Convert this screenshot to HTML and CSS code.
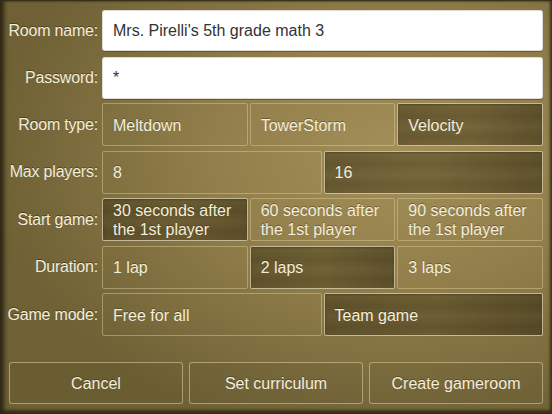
FILE: index.html
```html
<!DOCTYPE html>
<html lang="en">
<head>
  <meta charset="UTF-8">
  <title>Create gameroom</title>
  <link rel="stylesheet" href="styles.css">
</head>
<body>

<div class="screen">
  <form class="room-form">
    <div class="row input-row">
      <label>Room name:</label>
      <input type="text" value="Mrs. Pirelli's 5th grade math 3">
    </div>
    <div class="row input-row pw">
      <label>Password:</label>
      <input type="text" value="*">
    </div>

    <div class="options">
      <div class="row">
        <label>Room type:</label>
        <div class="choices three">
          <div class="choice">Meltdown</div>
          <div class="choice">TowerStorm</div>
          <div class="choice selected">Velocity</div>
        </div>
      </div>
      <div class="row">
        <label>Max players:</label>
        <div class="choices two">
          <div class="choice">8</div>
          <div class="choice selected">16</div>
        </div>
      </div>
      <div class="row">
        <label>Start game:</label>
        <div class="choices three">
          <div class="choice selected">30 seconds after<br>the 1st player</div>
          <div class="choice">60 seconds after<br>the 1st player</div>
          <div class="choice">90 seconds after<br>the 1st player</div>
        </div>
      </div>
      <div class="row">
        <label>Duration:</label>
        <div class="choices three">
          <div class="choice">1 lap</div>
          <div class="choice selected">2 laps</div>
          <div class="choice">3 laps</div>
        </div>
      </div>
      <div class="row">
        <label>Game mode:</label>
        <div class="choices two">
          <div class="choice">Free for all</div>
          <div class="choice selected">Team game</div>
        </div>
      </div>
    </div>
  </form>

  <div class="actions">
    <button type="button">Cancel</button>
    <button type="button">Set curriculum</button>
    <button type="button">Create gameroom</button>
  </div>
</div>

</body>
</html>
```

FILE: styles.css
```css
html, body {
  margin: 0;
  padding: 0;
}
body {
  font-family: 'Liberation Sans', Arial, sans-serif;
  font-size: 16px;
  color: #f3eedc;
}
.screen {
  width: 552px;
  height: 414px;
  box-sizing: border-box;
  padding: 10px 9px 0 0;
  background:
    radial-gradient(ellipse 75% 70% at 72% 38%, #a28f59 0%, #917e4a 45%, #77683b 85%, #6f6035 100%);
  box-shadow:
    inset 5px 0 4px -1px #2d2815,
    inset 0 2px 2px -1px #2d2815,
    inset -3px 0 3px -1px #3a3219,
    inset 0 -5px 3px -1px #3a3219;
  overflow: hidden;
}
.row {
  display: flex;
  align-items: center;
  height: 43px;
}
.row label {
  flex: 0 0 99px;
  box-sizing: border-box;
  text-align: right;
  padding-right: 1px;
  margin-right: 3px;
  white-space: nowrap;
  letter-spacing: -0.2px;
  text-shadow: 0 -1px 0 rgba(40, 32, 10, 0.5);
}
.input-row {
  height: 41px;
}
.input-row.pw {
  height: 42px;
  margin-top: 6px;
}
.input-row input {
  flex: 1;
  height: 100%;
  box-sizing: border-box;
  margin: 0;
  border: none;
  border-radius: 3px;
  padding: 0 11px;
  font-family: inherit;
  font-size: 16px;
  color: #333;
  background: #fff;
  box-shadow: 0 1px 0 rgba(60, 50, 20, 0.45), inset 0 0 0 1px rgba(120, 110, 80, 0.25);
}
.options {
  display: flex;
  flex-direction: column;
  gap: 4.5px;
  margin-top: 4px;
}
.choices {
  flex: 1;
  height: 100%;
  display: grid;
  gap: 2px;
}
.choices.three {
  grid-template-columns: 1fr 1fr 1fr;
}
.choices.two {
  grid-template-columns: 1fr 1fr;
}
.choice {
  display: flex;
  align-items: center;
  box-sizing: border-box;
  padding: 1px 10px 0;
  line-height: 19px;
  border: 1px solid rgba(225, 210, 160, 0.45);
  border-radius: 2px;
  text-shadow: 0 -1px 0 rgba(40, 32, 10, 0.4);
}
.choice.selected {
  border-color: rgba(235, 228, 200, 0.7);
  background:
    linear-gradient(180deg, rgba(255, 240, 190, 0.03) 0%, rgba(30, 22, 5, 0.06) 30%, rgba(255, 240, 190, 0.03) 55%, rgba(30, 22, 5, 0.05) 80%, rgba(255, 240, 190, 0.02) 100%),
    linear-gradient(90deg, rgba(62, 51, 22, 0.55), rgba(72, 60, 27, 0.5) 50%, rgba(56, 46, 20, 0.6));
  box-shadow: inset 0 1px 2px rgba(20, 15, 0, 0.3);
}
.actions {
  display: flex;
  gap: 6px;
  margin-top: 26px;
  padding-left: 9px;
}
.actions button {
  flex: 1;
  height: 42px;
  margin: 0;
  padding-top: 2px;
  font-family: inherit;
  font-size: 16px;
  color: #f3eedc;
  background: rgba(70, 58, 26, 0.08);
  border: 1px solid rgba(225, 212, 170, 0.55);
  border-radius: 3px;
  text-shadow: 0 -1px 0 rgba(40, 32, 10, 0.4);
}
```
